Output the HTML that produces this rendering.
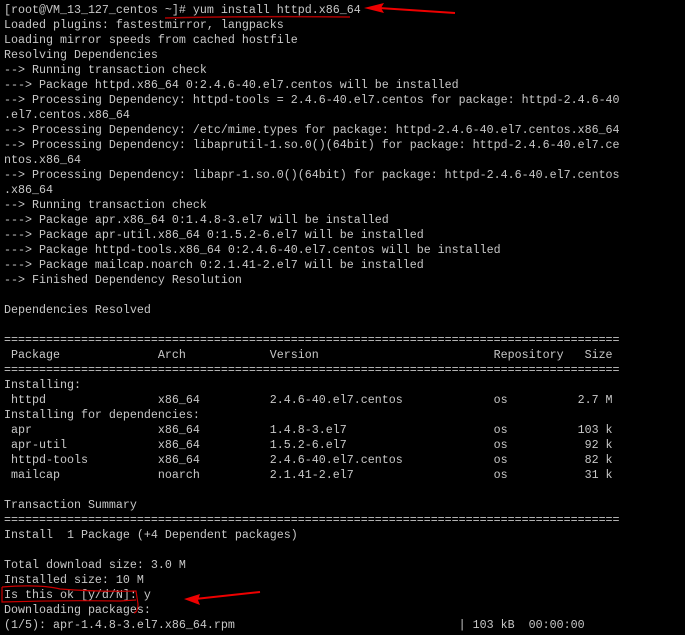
<!DOCTYPE html>
<html><head><meta charset="utf-8"><style>
html,body{margin:0;padding:0;background:#000;width:685px;height:635px;overflow:hidden}
pre{position:absolute;left:4px;top:3px;margin:0;font-family:"Liberation Mono","DejaVu Sans Mono",monospace;font-size:11.67px;line-height:15px;color:#c8c8c8;letter-spacing:0}
svg{position:absolute;left:0;top:0}
</style></head><body>
<pre>[root@VM_13_127_centos ~]# yum install httpd.x86_64
Loaded plugins: fastestmirror, langpacks
Loading mirror speeds from cached hostfile
Resolving Dependencies
--> Running transaction check
---> Package httpd.x86_64 0:2.4.6-40.el7.centos will be installed
--> Processing Dependency: httpd-tools = 2.4.6-40.el7.centos for package: httpd-2.4.6-40
.el7.centos.x86_64
--> Processing Dependency: /etc/mime.types for package: httpd-2.4.6-40.el7.centos.x86_64
--> Processing Dependency: libaprutil-1.so.0()(64bit) for package: httpd-2.4.6-40.el7.ce
ntos.x86_64
--> Processing Dependency: libapr-1.so.0()(64bit) for package: httpd-2.4.6-40.el7.centos
.x86_64
--> Running transaction check
---> Package apr.x86_64 0:1.4.8-3.el7 will be installed
---> Package apr-util.x86_64 0:1.5.2-6.el7 will be installed
---> Package httpd-tools.x86_64 0:2.4.6-40.el7.centos will be installed
---> Package mailcap.noarch 0:2.1.41-2.el7 will be installed
--> Finished Dependency Resolution

Dependencies Resolved

========================================================================================
 Package              Arch            Version                         Repository   Size
========================================================================================
Installing:
 httpd                x86_64          2.4.6-40.el7.centos             os          2.7 M
Installing for dependencies:
 apr                  x86_64          1.4.8-3.el7                     os          103 k
 apr-util             x86_64          1.5.2-6.el7                     os           92 k
 httpd-tools          x86_64          2.4.6-40.el7.centos             os           82 k
 mailcap              noarch          2.1.41-2.el7                    os           31 k

Transaction Summary
========================================================================================
Install  1 Package (+4 Dependent packages)

Total download size: 3.0 M
Installed size: 10 M
Is this ok [y/d/N]: y
Downloading packages:
(1/5): apr-1.4.8-3.el7.x86_64.rpm                                | 103 kB  00:00:00</pre>
<svg width="685" height="635" viewBox="0 0 685 635">
<path d="M165 18 Q250 16 350 17" stroke="#a00" stroke-width="1.5" fill="none"/>
<path d="M455 13 L380 8" stroke="#e00" stroke-width="2" fill="none"/>
<path d="M364 8 L384 3 L381 8 L384 13 Z" fill="#e00"/>
<path d="M2 587 Q40 584 60 589 Q100 592 136 591 L138 604 Q138 612 134 613" stroke="#c00" stroke-width="1.2" fill="none"/>
<path d="M2 587 L2 602 Q60 600 120 601 L136 600" stroke="#c00" stroke-width="1.2" fill="none"/>
<path d="M260 592 L195 599" stroke="#e00" stroke-width="2" fill="none"/>
<path d="M184 599 L200 594 L198 600 L200 605 Z" fill="#e00"/>
</svg>
</body></html>
